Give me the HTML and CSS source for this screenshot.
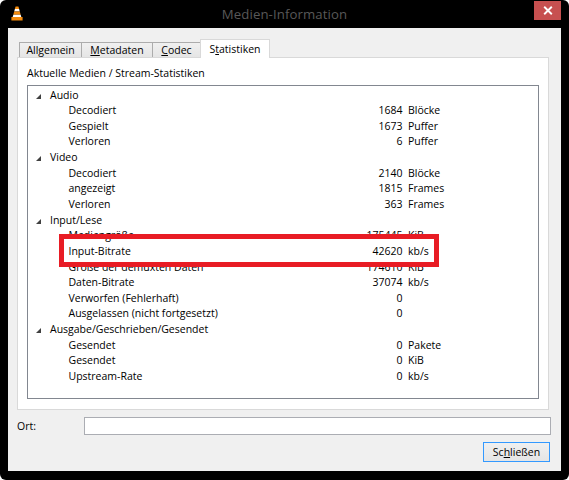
FILE: index.html
```
<!DOCTYPE html>
<html lang="de">
<head>
<meta charset="utf-8">
<title>Medien-Information</title>
<link rel="stylesheet" href="styles.css">
</head>
<body>
<div class="window">
  <div class="titlebar">
    <div class="tb-left">
      <svg class="cone" width="12" height="15" viewBox="0 0 12 15">
        <path d="M4.6 0.5h2.8l0.8 2.6h-4.4z" fill="#f28a0c"/>
        <path d="M3.9 3.1h4.2l0.7 2.4h-5.6z" fill="#ffffff"/>
        <path d="M3.2 5.5h5.6l0.9 3.2h-7.4z" fill="#f28a0c"/>
        <path d="M2.3 8.7h7.4l0.6 2.2h-8.6z" fill="#ffffff"/>
        <path d="M0.4 10.9h11.2v3.6h-11.2z" fill="#f28a0c"/>
      </svg>
    </div>
    <div class="title">Medien-Information</div>
    <div class="tb-right">
      <div class="close">
        <svg width="10" height="9" viewBox="0 0 10 9"><path d="M1.2 0.8L8.8 8.2M8.8 0.8L1.2 8.2" stroke="#ffffff" stroke-width="1.9" fill="none"/></svg>
      </div>
    </div>
  </div>
  <div class="client">
    <div class="tabs">
      <div class="tab tab-1">Allgemein</div>
      <div class="tab tab-2"><u>M</u>etadaten</div>
      <div class="tab tab-3"><u>C</u>odec</div>
      <div class="tab tab-4 active">S<u>t</u>atistiken</div>
    </div>
    <div class="panel">
      <div class="caption">Aktuelle Medien / Stream-Statistiken</div>
      <div class="tree">
        <div class="row cat"><span class="name"><i class="arrow"></i>Audio</span></div>
        <div class="row"><span class="name">Decodiert</span><span class="val">1684</span><span class="unit">Blöcke</span></div>
        <div class="row"><span class="name">Gespielt</span><span class="val">1673</span><span class="unit">Puffer</span></div>
        <div class="row"><span class="name">Verloren</span><span class="val">6</span><span class="unit">Puffer</span></div>
        <div class="row cat"><span class="name"><i class="arrow"></i>Video</span></div>
        <div class="row"><span class="name">Decodiert</span><span class="val">2140</span><span class="unit">Blöcke</span></div>
        <div class="row"><span class="name">angezeigt</span><span class="val">1815</span><span class="unit">Frames</span></div>
        <div class="row"><span class="name">Verloren</span><span class="val">363</span><span class="unit">Frames</span></div>
        <div class="row cat"><span class="name"><i class="arrow"></i>Input/Lese</span></div>
        <div class="row"><span class="name">Mediengröße</span><span class="val">175445</span><span class="unit">KiB</span></div>
        <div class="row"><span class="name">Input-Bitrate</span><span class="val">42620</span><span class="unit">kb/s</span></div>
        <div class="row"><span class="name">Größe der demuxten Daten</span><span class="val">174610</span><span class="unit">KiB</span></div>
        <div class="row"><span class="name">Daten-Bitrate</span><span class="val">37074</span><span class="unit">kb/s</span></div>
        <div class="row"><span class="name">Verworfen (Fehlerhaft)</span><span class="val">0</span><span class="unit"></span></div>
        <div class="row"><span class="name">Ausgelassen (nicht fortgesetzt)</span><span class="val">0</span><span class="unit"></span></div>
        <div class="row cat"><span class="name"><i class="arrow"></i>Ausgabe/Geschrieben/Gesendet</span></div>
        <div class="row"><span class="name">Gesendet</span><span class="val">0</span><span class="unit">Pakete</span></div>
        <div class="row"><span class="name">Gesendet</span><span class="val">0</span><span class="unit">KiB</span></div>
        <div class="row"><span class="name">Upstream-Rate</span><span class="val">0</span><span class="unit">kb/s</span></div>
        <div class="highlight"></div>
      </div>
    </div>
    <div class="ort">
      <span class="ort-label">Ort:</span>
      <div class="input"></div>
    </div>
    <div class="actions">
      <button class="btn" type="button">Sc<u>h</u>ließen</button>
    </div>
  </div>
</div>
</body>
</html>
```

FILE: styles.css
```
html, body {
  margin: 0;
  padding: 0;
  background: #ffffff;
}

body {
  font-family: "Open Sans", "Noto Sans", sans-serif;
  font-size: 10.5px;
  color: #000000;
}

.window {
  width: 569px;
  height: 480px;
  background: #000000;
  border-radius: 6px;
  display: flex;
  flex-direction: column;
  overflow: hidden;
}

.titlebar {
  height: 28px;
  display: grid;
  grid-template-columns: 1fr auto 1fr;
  align-items: center;
}

.tb-left {
  padding-left: 11px;
  display: flex;
  align-items: center;
  height: 28px;
}

.cone {
  display: block;
  margin-top: -1px;
}

.title {
  font-size: 13.2px;
  color: #585858;
  line-height: 28px;
  letter-spacing: 0.1px;
}

.tb-right {
  justify-self: end;
  align-self: start;
  padding-right: 8px;
  padding-top: 1px;
}

.close {
  width: 27px;
  height: 19px;
  background: #c75050;
  display: flex;
  align-items: center;
  justify-content: center;
}

.close svg {
  display: block;
}

.client {
  margin: 0 8px;
  height: 443px;
  background: #f0f0f0;
  box-sizing: border-box;
  padding: 11px 0 9px 9px;
  display: flex;
  flex-direction: column;
}

.tabs {
  display: flex;
  align-items: flex-end;
  height: 18px;
  margin-left: 2px;
}

.tab {
  box-sizing: border-box;
  height: 15px;
  border: 1px solid #acacac;
  border-bottom: none;
  background: linear-gradient(#f0f0f0, #e5e5e5);
  text-align: center;
  line-height: 14px;
  white-space: nowrap;
}

.tab + .tab {
  margin-left: -1px;
}

.tab-1 { width: 63px; }
.tab-2 { width: 72px; }
.tab-3 { width: 49px; }
.tab-4 { width: 70px; }

.tab.active {
  height: 19px;
  margin-bottom: -1px;
  background: #ffffff;
  border-color: #d9d9d9;
  position: relative;
  z-index: 1;
  line-height: 18px;
}

.tab u, .btn u {
  text-decoration-thickness: 1px;
  text-underline-offset: 1px;
}

.panel {
  box-sizing: border-box;
  width: 532px;
  height: 353px;
  background: #ffffff;
  border: 1px solid #d9d9d9;
  padding: 8px 9px 10px 9px;
  display: flex;
  flex-direction: column;
}

.caption {
  height: 15px;
  line-height: 15px;
  margin-bottom: 4px;
  white-space: nowrap;
}

.tree {
  box-sizing: border-box;
  height: 314px;
  border: 1px solid #828790;
  background: #ffffff;
  position: relative;
  padding-top: 1.5px;
}

.row {
  display: grid;
  grid-template-columns: 260px 114.5px 1fr;
  height: 15.65px;
  line-height: 15.65px;
  white-space: nowrap;
}

.name {
  padding-left: 40.5px;
  overflow: visible;
}

.cat .name {
  padding-left: 8px;
  display: flex;
  align-items: center;
}

.arrow {
  display: block;
  width: 0;
  height: 0;
  border-style: solid;
  border-width: 0 0 5px 5px;
  border-color: transparent transparent #404040 transparent;
  margin-right: 9px;
  margin-top: 2px;
}

.val {
  text-align: right;
}

.unit {
  padding-left: 5.5px;
}

.highlight {
  position: absolute;
  left: 31px;
  top: 148px;
  width: 380px;
  height: 33px;
  box-sizing: border-box;
  border: 5px solid #e81c24;
}

.ort {
  margin-top: 7px;
  display: flex;
  align-items: center;
  height: 18px;
}

.ort-label {
  width: 67px;
  flex: none;
}

.input {
  box-sizing: border-box;
  width: 467px;
  height: 18px;
  background: #ffffff;
  border: 1px solid #abadb3;
}

.actions {
  margin-top: 7px;
  display: flex;
  justify-content: flex-end;
  padding-right: 11px;
}

.btn {
  box-sizing: border-box;
  width: 67px;
  height: 20px;
  margin: 0;
  padding: 0;
  font-family: "Open Sans", "Noto Sans", sans-serif;
  font-size: 10.5px;
  color: #000000;
  background: linear-gradient(#f0f0f0, #e5e5e5);
  border: 1px solid #3399ff;
  border-radius: 0;
  line-height: 18px;
}
```
